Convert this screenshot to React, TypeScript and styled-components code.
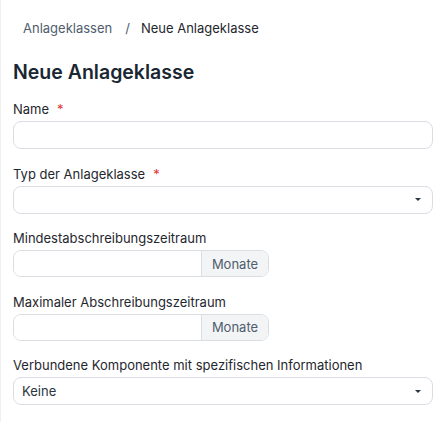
import React from 'react';
import styled, { createGlobalStyle } from 'styled-components';

const GlobalStyle = createGlobalStyle`
  html, body {
    margin: 0;
    padding: 0;
    background: #ffffff;
  }
  body {
    font-family: Inter, "Noto Sans", "Liberation Sans", sans-serif;
    color: #1f272e;
  }
`;

interface FieldProps {
  label: string;
  required?: boolean;
  children: React.ReactNode;
}

function Field({ label, required, children }: FieldProps): JSX.Element {
  return (
    <FieldWrapper>
      <Label>
        {label}
        {required && <Star>*</Star>}
      </Label>
      {children}
    </FieldWrapper>
  );
}

function Caret(): JSX.Element {
  return (
    <CaretIcon width="8" height="5" viewBox="0 0 8 5">
      <path d="M1 1h6L4 4z" fill="#2b3640" />
    </CaretIcon>
  );
}

function App(): JSX.Element {
  return (
    <Page>
      <GlobalStyle />
      <Breadcrumbs>
        <Crumb>Anlageklassen</Crumb>
        <Separator>/</Separator>
        <Crumb $current>Neue Anlageklasse</Crumb>
      </Breadcrumbs>
      <Title>Neue Anlageklasse</Title>
      <Field label="Name" required>
        <Input />
      </Field>
      <Field label="Typ der Anlageklasse" required>
        <Select>
          <SelectValue />
          <Caret />
        </Select>
      </Field>
      <Field label="Mindestabschreibungszeitraum">
        <InputGroup>
          <GroupInput />
          <Addon>Monate</Addon>
        </InputGroup>
      </Field>
      <Field label="Maximaler Abschreibungszeitraum">
        <InputGroup>
          <GroupInput />
          <Addon>Monate</Addon>
        </InputGroup>
      </Field>
      <Field label="Verbundene Komponente mit spezifischen Informationen">
        <Select>
          <SelectValue>Keine</SelectValue>
          <Caret />
        </Select>
      </Field>
    </Page>
  );
}

const Page = styled.div`
  width: 444px;
  height: 422px;
  box-sizing: border-box;
  padding: 18px 11px 0 12px;
  border-left: 1px solid #eef0f2;
  overflow: hidden;
`;

const Breadcrumbs = styled.nav`
  display: flex;
  align-items: center;
  height: 20px;
  padding-left: 10px;
  font-size: 13px;
`;

const Crumb = styled.span<{ $current?: boolean }>`
  color: ${({ $current }) => ($current ? '#1f272e' : '#4f5d6e')};
`;

const Separator = styled.span`
  color: #4f5d6e;
  margin: 0 11px 0 13px;
`;

const Title = styled.h1`
  margin: 22px 0 15px;
  font-size: 19.5px;
  font-weight: 600;
  line-height: 24px;
  color: #1a2733;
`;

const FieldWrapper = styled.div`
  display: flex;
  flex-direction: column;
  gap: 2px;
  margin-bottom: 14.5px;
`;

const Label = styled.label`
  font-size: 13px;
  line-height: 20px;
  color: #1f272e;
`;

const Star = styled.span`
  color: #e03636;
  margin-left: 8px;
`;

const Input = styled.input`
  box-sizing: border-box;
  width: 100%;
  height: 28px;
  border: 1px solid #dadee3;
  border-radius: 8px;
  background: #ffffff;
  outline: none;
`;

const Select = styled.div`
  box-sizing: border-box;
  display: flex;
  align-items: center;
  justify-content: space-between;
  width: 100%;
  height: 28px;
  padding: 0 10px 0 8px;
  border: 1px solid #dadee3;
  border-radius: 8px;
  background: #ffffff;
`;

const SelectValue = styled.span`
  font-size: 13px;
  color: #2b3640;
`;

const CaretIcon = styled.svg`
  display: block;
  flex-shrink: 0;
`;

const InputGroup = styled.div`
  box-sizing: border-box;
  display: flex;
  width: 256px;
  height: 27px;
  border: 1px solid #dadee3;
  border-radius: 8px;
  overflow: hidden;
`;

const GroupInput = styled.input`
  flex: 1;
  min-width: 0;
  border: none;
  outline: none;
  background: #ffffff;
`;

const Addon = styled.span`
  display: flex;
  align-items: center;
  justify-content: center;
  width: 66px;
  border-left: 1px solid #dadee3;
  background: #f3f4f5;
  font-size: 13px;
  color: #4f5d6e;
`;

export default App;
